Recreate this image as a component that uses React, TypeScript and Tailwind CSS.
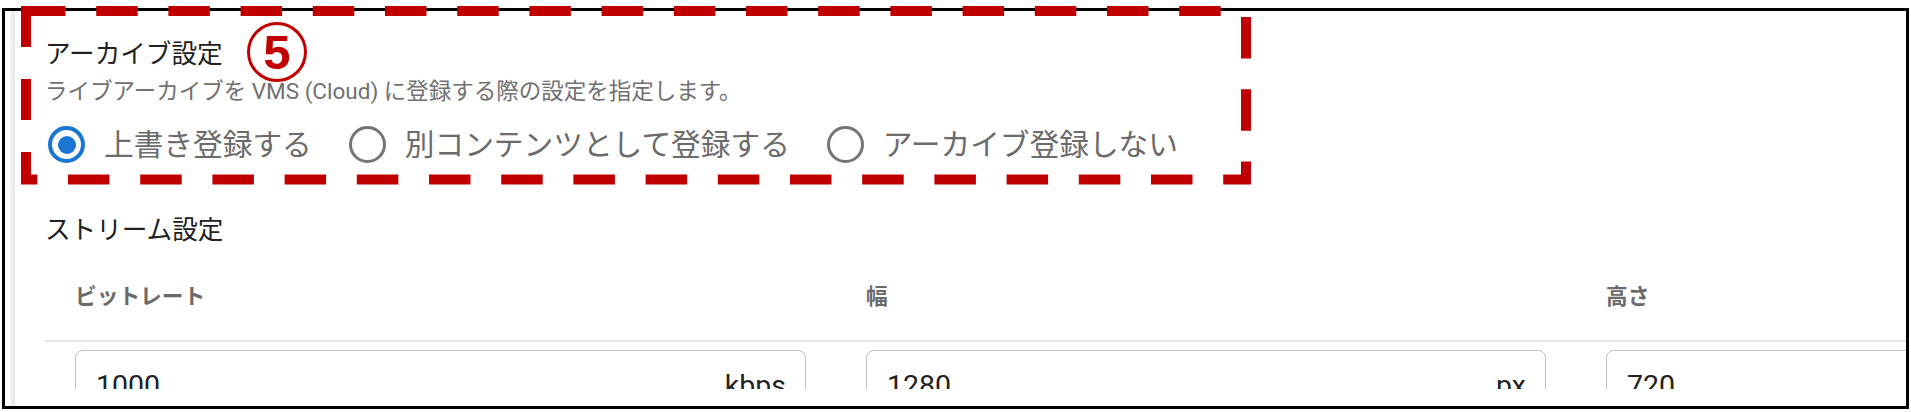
import React from 'react';

const FONT = "font-['Roboto','Noto_Sans_CJK_JP',sans-serif]";

const Radio = ({ checked }: { checked?: boolean }) =>
  checked ? (
    <span className="flex h-[37px] w-[37px] shrink-0 items-center justify-center rounded-full border-[4px] border-[#1976d2]">
      <span className="h-[18px] w-[18px] rounded-full bg-[#1976d2]" />
    </span>
  ) : (
    <span className="h-[37px] w-[37px] shrink-0 rounded-full border-[3.5px] border-[#757575]" />
  );

const options = [
  { label: '上書き登録する', checked: true },
  { label: '別コンテンツとして登録する' },
  { label: 'アーカイブ登録しない' },
];

const columns = [
  { label: 'ビットレート', value: '1000', unit: 'kbps', width: 'w-[791px]' },
  { label: '幅', value: '1280', unit: 'px', width: 'w-[740px]' },
  { label: '高さ', value: '720', unit: '', width: 'w-[740px]' },
];

export default function App() {
  return (
    <div className={`relative h-[412px] w-[1911px] overflow-hidden bg-white ${FONT}`}>
      {/* Frame */}
      <div className="ml-[2px] mt-[8px] flex h-[401px] w-[1907px] border-[3px] border-black">
        <div className="w-[5px] shrink-0" />
        <div className="w-[5px] shrink-0 bg-gradient-to-r from-[#f6f6f6] to-[#e6e6e6]" />
        <div className="flex h-[378px] min-w-0 flex-1 flex-col overflow-hidden pl-[30px]">
          {/* Archive settings */}
          <h2 className="mt-[27px] text-[25.6px] leading-[32px] text-[#212121]">アーカイブ設定</h2>
          <p className="mt-[6px] text-[22.5px] leading-[30px] text-[#707070]">
            ライブアーカイブを VMS (Cloud) に登録する際の設定を指定します。
          </p>
          <div className="ml-[3px] mt-[20px] flex items-center">
            {options.map((o) => (
              <label key={o.label} className="mr-[37px] flex items-center gap-[19px]">
                <Radio checked={o.checked} />
                <span className="text-[29.7px] leading-[37px] text-[#6b6b6b]">{o.label}</span>
              </label>
            ))}
          </div>

          {/* Stream settings */}
          <h2 className="mt-[51px] text-[25.6px] leading-[32px] text-[#212121]">ストリーム設定</h2>
          <div className="mt-[37px] flex border-b-[2px] border-[#e4e4e4] pb-[29px]">
            {columns.map((c) => (
              <div key={c.label} className={`${c.width} shrink-0 px-[30px]`}>
                <span className="text-[21.7px] font-semibold leading-[28px] text-[#6a6a6a]">{c.label}</span>
              </div>
            ))}
          </div>
          <div className="mt-[8px] flex">
            {columns.map((c) => (
              <div key={c.label} className={`${c.width} shrink-0 px-[30px]`}>
                <div className="flex h-[80px] items-start justify-between rounded-[8px] border border-[#bdbdbd] pl-[20px] pr-[19px] pt-[18px]">
                  <span className="text-[28.5px] leading-[34px] text-[#212121]">{c.value}</span>
                  <span className="text-[28.5px] leading-[34px] text-[#212121]">{c.unit}</span>
                </div>
              </div>
            ))}
          </div>
        </div>
      </div>

      {/* Annotation: dashed box */}
      <svg className="pointer-events-none absolute left-0 top-0" width="1911" height="412">
        <g stroke="#c00000" strokeWidth="10" fill="none">
          <line x1="24" y1="11" x2="1222" y2="11" strokeDasharray="41.5 30.7" />
          <line x1="26" y1="6" x2="26" y2="184" strokeDasharray="41 32" />
          <line x1="1246" y1="17" x2="1246" y2="184" strokeDasharray="41.5 30.7" />
          <line x1="21" y1="179.5" x2="1251" y2="179.5" strokeDasharray="41.5 30.7" strokeDashoffset="25.2" />
        </g>
      </svg>

      {/* Annotation: number badge */}
      <div className="absolute left-[247px] top-[22px] flex h-[60px] w-[60px] items-center justify-center rounded-full border-[3px] border-[#c00000]">
        <span className="font-['Liberation_Sans',Arial,sans-serif] text-[49px] font-bold leading-none text-[#c00000]">5</span>
      </div>
    </div>
  );
}
